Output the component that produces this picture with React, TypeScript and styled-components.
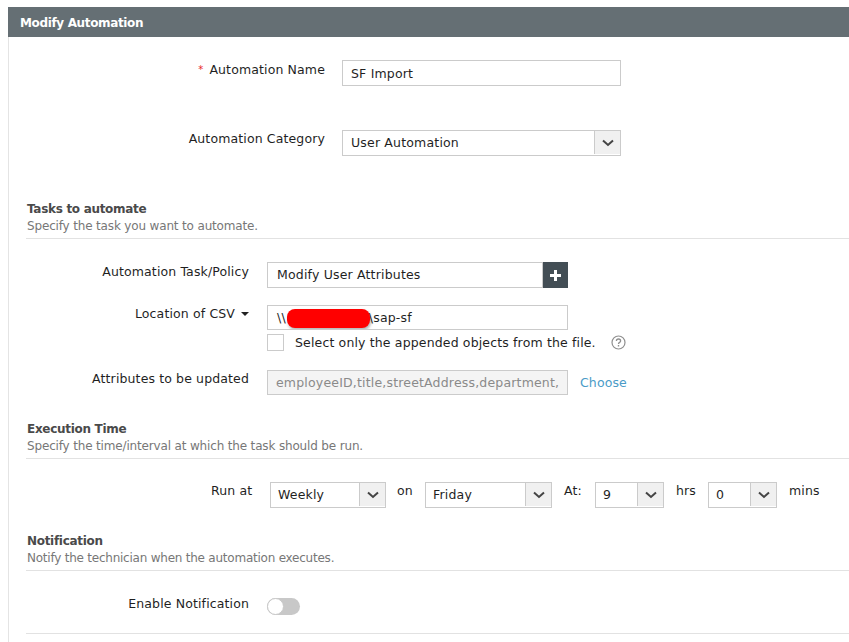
import React from "react";
import styled, { createGlobalStyle } from "styled-components";

const Global = createGlobalStyle`
  html, body { margin: 0; padding: 0; background: #fff; overflow: hidden; }
  body { font-family: "DejaVu Sans", Verdana, sans-serif; font-size: 12.5px; color: #1f1f1f; letter-spacing: 0.13px; }
`;

const Panel = styled.div`
  margin: 7px 0 0 8px;
  width: 841px;
  height: 635px;
  border-left: 1px solid #e4e4e4;
  box-sizing: border-box;
`;
const Header = styled.div`
  margin-left: -1px;
  height: 30px;
  background: #656f74;
  color: #fff;
  font-weight: bold;
  font-size: 12px;
  line-height: 32px;
  padding-left: 12px;
  letter-spacing: -0.35px;
`;
const Body = styled.div`
  padding-left: 17px;
  display: flex;
  flex-direction: column;
`;
const Row = styled.div<{ $labelW: number; $top: number }>`
  display: grid;
  grid-template-columns: ${(p) => p.$labelW}px auto;
  column-gap: ${(p) => (p.$labelW > 250 ? 17 : 18)}px;
  margin-top: ${(p) => p.$top}px;
  align-items: start;
  justify-content: start;
`;
const Label = styled.div<{ $shift?: number }>`
  text-align: right;
  line-height: 16px;
  padding-top: ${(p) => 1 + (p.$shift ?? 0)}px;
  white-space: nowrap;
`;
const Star = styled.span`
  color: #e8262a;
  font-size: 10px;
  margin-right: 6px;
  vertical-align: 1px;
`;
const Field = styled.div<{ $w: number; $h?: number; $pad?: number; $disabled?: boolean; $low?: boolean }>`
  width: ${(p) => p.$w}px;
  height: ${(p) => p.$h ?? 26}px;
  box-sizing: border-box;
  border: 1px solid #cbcbcb;
  padding-left: ${(p) => p.$pad ?? 8}px;
  padding-top: ${(p) => (p.$low ? 1 : 0)}px;
  line-height: ${(p) => (p.$h ?? 26) - 2}px;
  background: ${(p) => (p.$disabled ? "#f4f4f4" : "#fff")};
  color: ${(p) => (p.$disabled ? "#8a8a8a" : "#1f1f1f")};
  letter-spacing: 0.18px;
  white-space: nowrap;
  overflow: hidden;
  position: relative;
  flex: none;
`;
const SelectBox = styled(Field)`
  display: flex;
  justify-content: space-between;
  padding-right: 0;
`;
const Arrow = styled.div`
  width: 25px;
  height: 23px;
  background: #f0f0f0;
  border-left: 1px solid #cbcbcb;
  display: flex;
  align-items: center;
  justify-content: center;
  flex: none;
`;
const Chevron = () => (
  <svg width="12" height="8" viewBox="0 0 12 8">
    <polyline points="1,1.5 6,6 11,1.5" fill="none" stroke="#444" strokeWidth="2" />
  </svg>
);
const Select = ({ w, pad, children }: { w: number; pad?: number; children: React.ReactNode }) => (
  <SelectBox $w={w} $pad={pad}>
    <span>{children}</span>
    <Arrow>
      <Chevron />
    </Arrow>
  </SelectBox>
);
const Section = styled.div<{ $top: number }>`
  margin-top: ${(p) => p.$top}px;
  height: 36px;
  border-bottom: 1px solid #e2e2e2;
`;
const SectionTitle = styled.div`
  font-weight: bold;
  font-size: 12px;
  line-height: 14px;
  color: #4a4a4a;
  letter-spacing: -0.3px;
  padding-left: 1px;
`;
const SectionDesc = styled.div<{ $tight?: boolean }>`
  font-size: 12px;
  line-height: 16px;
  margin-top: 2px;
  color: #777;
  letter-spacing: ${(p) => (p.$tight ? -0.23 : -0.16)}px;
  padding-left: 1px;
`;
const InputGroup = styled.div`
  display: flex;
`;
const PlusButton = styled.div`
  width: 25px;
  height: 26px;
  background: #434e55;
  display: flex;
  align-items: center;
  justify-content: center;
`;
const Column = styled.div`
  display: flex;
  flex-direction: column;
`;
const Redaction = styled.span`
  position: absolute;
  left: 19px;
  top: 3px;
  width: 83px;
  height: 19px;
  border-radius: 8px;
  background: #ff0000;
  box-shadow: 1px 2px 3px rgba(0, 0, 0, 0.3);
`;
const PathTail = styled.span`
  margin-left: 83px;
`;
const CheckRow = styled.div`
  display: flex;
  align-items: center;
  margin-top: 4px;
  height: 17px;
  letter-spacing: 0.15px;
`;
const CheckBox = styled.div`
  width: 17px;
  height: 17px;
  box-sizing: border-box;
  border: 1px solid #cbcbcb;
  background: #fff;
  margin-right: 11px;
`;
const HelpSvg = styled.svg`
  margin-left: 15px;
`;
const HelpIcon = () => (
  <HelpSvg width="15" height="15" viewBox="0 0 15 15">
    <circle cx="7.5" cy="7.5" r="6.5" fill="none" stroke="#8f8f8f" strokeWidth="1.2" />
    <path d="M5.4 6c0-1.3 1-2 2.1-2s2.1.7 2.1 1.9c0 1.5-2.1 1.5-2.1 3" fill="none" stroke="#8f8f8f" strokeWidth="1.3" />
    <rect x="6.8" y="10" width="1.4" height="1.5" fill="#8f8f8f" />
  </HelpSvg>
);
const ChooseRow = styled.div`
  display: flex;
  align-items: center;
  gap: 12px;
`;
const Choose = styled.a`
  color: #4a9bc7;
`;
const Caret = styled.span`
  display: inline-block;
  width: 0;
  height: 0;
  border-left: 4px solid transparent;
  border-right: 4px solid transparent;
  border-top: 4px solid #222;
  margin-left: 6px;
  vertical-align: 2px;
`;
const ScheduleRow = styled.div`
  display: flex;
  align-items: flex-start;
  margin-top: 23px;
  margin-left: 185px;
`;
const ScheduleText = styled.span<{ $w: number; $l?: number }>`
  flex: none;
  box-sizing: border-box;
  width: ${(p) => p.$w}px;
  padding-left: ${(p) => p.$l ?? 12}px;
  line-height: 16px;
  padding-top: 1px;
  white-space: nowrap;
`;
const Toggle = styled.div`
  width: 33px;
  height: 17px;
  border-radius: 9px;
  background: #c8c8c8;
  position: relative;
  margin-top: 2px;
`;
const Knob = styled.div`
  position: absolute;
  left: 0;
  top: 0;
  width: 17px;
  height: 17px;
  box-sizing: border-box;
  border-radius: 50%;
  background: #fff;
  border: 1px solid #c8c8c8;
`;
const Divider = styled.div`
  margin-top: 18px;
  height: 1px;
  background: #e2e2e2;
`;

export default function App() {
  return (
    <>
      <Global />
      <Panel>
        <Header>Modify Automation</Header>
        <Body>
          <Row $labelW={299} $top={23}>
            <Label $shift={1}><Star>*</Star>Automation Name</Label>
            <Field $w={279} $low>SF Import</Field>
          </Row>
          <Row $labelW={299} $top={44}>
            <Label>Automation Category</Label>
            <Select w={279}>User Automation</Select>
          </Row>
          <Section $top={46}>
            <SectionTitle>Tasks to automate</SectionTitle>
            <SectionDesc>Specify the task you want to automate.</SectionDesc>
          </Section>
          <Row $labelW={223} $top={23}>
            <Label $shift={1}>Automation Task/Policy</Label>
            <InputGroup>
              <Field $w={276} $pad={9}>Modify User Attributes</Field>
              <PlusButton>
                <svg width="13" height="13" viewBox="0 0 13 13">
                  <path d="M6.5 1v11M1 6.5h11" stroke="#fff" strokeWidth="3" fill="none" />
                </svg>
              </PlusButton>
            </InputGroup>
          </Row>
          <Row $labelW={223} $top={17}>
            <Label>Location of CSV<Caret /></Label>
            <Column>
              <Field $w={301} $h={25} $pad={9}>
                \\<Redaction />
                <PathTail>\sap-sf</PathTail>
              </Field>
              <CheckRow>
                <CheckBox />
                Select only the appended objects from the file.
                <HelpIcon />
              </CheckRow>
            </Column>
          </Row>
          <Row $labelW={223} $top={19}>
            <Label>Attributes to be updated</Label>
            <ChooseRow>
              <Field $w={301} $h={25} $disabled>employeeID,title,streetAddress,department,</Field>
              <Choose>Choose</Choose>
            </ChooseRow>
          </Row>
          <Section $top={27}>
            <SectionTitle>Execution Time</SectionTitle>
            <SectionDesc>Specify the time/interval at which the task should be run.</SectionDesc>
          </Section>
          <ScheduleRow>
            <ScheduleText $w={59} $l={0}>Run at</ScheduleText>
            <Select w={116} pad={7}>Weekly</Select>
            <ScheduleText $w={39} $l={11}>on</ScheduleText>
            <Select w={127} pad={7}>Friday</Select>
            <ScheduleText $w={43}>At:</ScheduleText>
            <Select w={69} pad={7}>9</Select>
            <ScheduleText $w={44}>hrs</ScheduleText>
            <Select w={69} pad={7}>0</Select>
            <ScheduleText $w={50}>mins</ScheduleText>
          </ScheduleRow>
          <Section $top={26}>
            <SectionTitle>Notification</SectionTitle>
            <SectionDesc $tight>Notify the technician when the automation executes.</SectionDesc>
          </Section>
          <Row $labelW={223} $top={25}>
            <Label $shift={-1}>Enable Notification</Label>
            <Toggle><Knob /></Toggle>
          </Row>
          <Divider />
        </Body>
      </Panel>
    </>
  );
}
